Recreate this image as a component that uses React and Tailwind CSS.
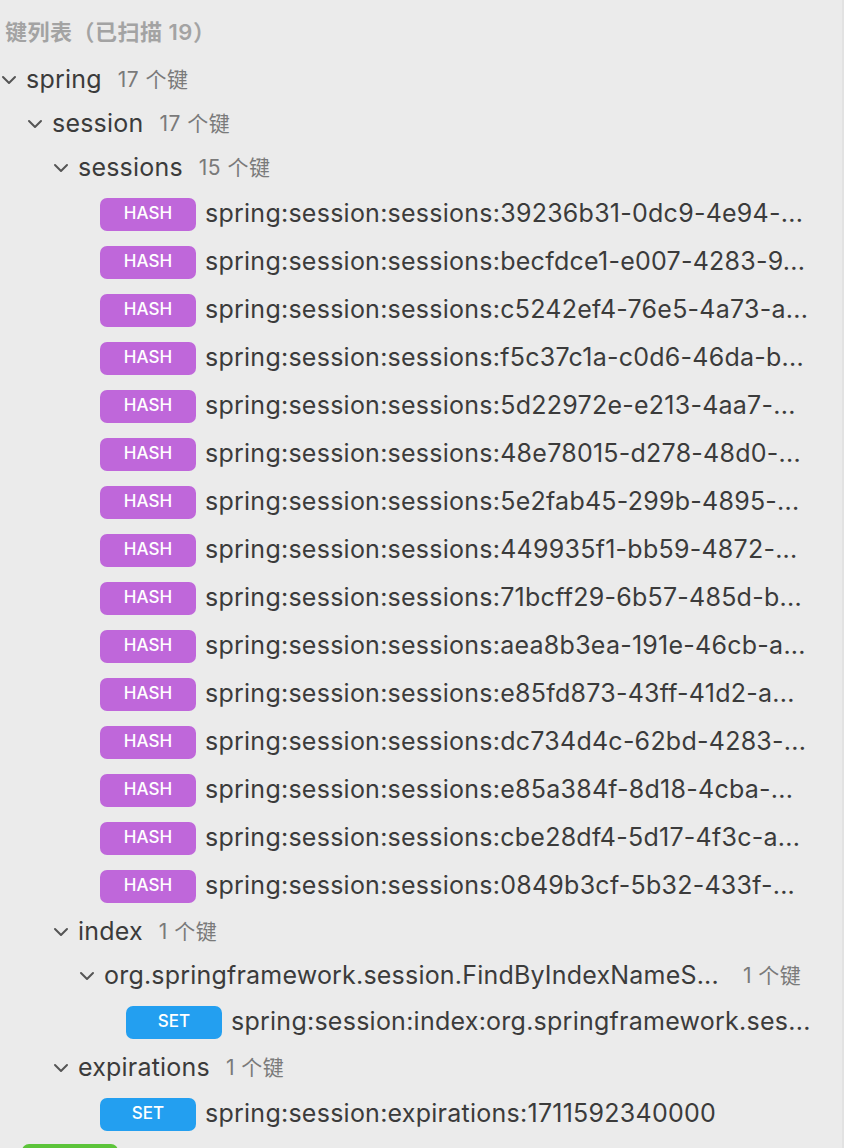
import React from "react";

const hashes = [
  "39236b31-0dc9-4e94-...",
  "becfdce1-e007-4283-9...",
  "c5242ef4-76e5-4a73-a...",
  "f5c37c1a-c0d6-46da-b...",
  "5d22972e-e213-4aa7-...",
  "48e78015-d278-48d0-...",
  "5e2fab45-299b-4895-...",
  "449935f1-bb59-4872-...",
  "71bcff29-6b57-485d-b...",
  "aea8b3ea-191e-46cb-a...",
  "e85fd873-43ff-41d2-a...",
  "dc734d4c-62bd-4283-...",
  "e85a384f-8d18-4cba-...",
  "cbe28df4-5d17-4f3c-a...",
  "0849b3cf-5b32-433f-...",
];

const font = { fontFamily: 'Inter, "Noto Sans CJK SC", sans-serif' };

function Chevron() {
  return (
    <svg width="16" height="10" viewBox="0 0 16 10" className="shrink-0">
      <path d="M2 2 L8 8 L14 2" fill="none" stroke="#555" strokeWidth="2" strokeLinecap="round" strokeLinejoin="round" />
    </svg>
  );
}

function Node({ depth, name, count, wide }) {
  const pads = ["pl-[1px]", "pl-[27px]", "pl-[53px]", "pl-[79px]"];
  return (
    <div className={`flex items-center h-[44px] ${pads[depth]}`}>
      <Chevron />
      <span className="ml-[9px] text-[25px] tracking-[0.2px] text-[#3b3b3b] whitespace-nowrap">{name}</span>
      <span className={`text-[21px] tracking-[0.5px] text-[#7a7a7a] shrink-0 whitespace-nowrap ${wide ? "ml-[24px]" : "ml-[16px]"}`}>{count}</span>
    </div>
  );
}

function Leaf({ depth, type, text }) {
  const pads = { 3: "pl-[100px]", 4: "pl-[126px]" };
  const colors = { HASH: "bg-[#bf67da]", SET: "bg-[#239ff0]" };
  return (
    <div className={`flex items-center h-[48px] ${pads[depth]}`}>
      <span className={`shrink-0 w-[96px] h-[33px] rounded-[7px] flex items-center justify-center text-white text-[17px] font-medium ${colors[type]}`}>
        {type}
      </span>
      <span className="ml-[9px] text-[25px] tracking-[0.25px] text-[#3b3b3b] whitespace-nowrap">{text}</span>
    </div>
  );
}

export default function App() {
  return (
    <div className="w-[844px] h-[1148px] overflow-hidden bg-[#ebebeb] border-r-2 border-[#e2e2e2]" style={font}>
      <div className="h-[58px] flex items-center pl-[5px] pt-[6px] text-[22px] tracking-[0.5px] font-semibold text-[#a3a3a3]">
        键列表（已扫描 19）
      </div>
      <Node depth={0} name="spring" count="17 个键" />
      <Node depth={1} name="session" count="17 个键" />
      <Node depth={2} name="sessions" count="15 个键" />
      {hashes.map((h) => (
        <Leaf key={h} depth={3} type="HASH" text={`spring:session:sessions:${h}`} />
      ))}
      <Node depth={2} name="index" count="1 个键" />
      <Node depth={3} name="org.springframework.session.FindByIndexNameS..." count="1 个键" wide />
      <Leaf depth={4} type="SET" text="spring:session:index:org.springframework.ses..." />
      <Node depth={2} name="expirations" count="1 个键" />
      <Leaf depth={3} type="SET" text="spring:session:expirations:1711592340000" />
      <div className="pl-[22px] pt-[6px]">
        <div className="w-[96px] h-[33px] rounded-[7px] bg-[#5cc43a]" />
      </div>
    </div>
  );
}
